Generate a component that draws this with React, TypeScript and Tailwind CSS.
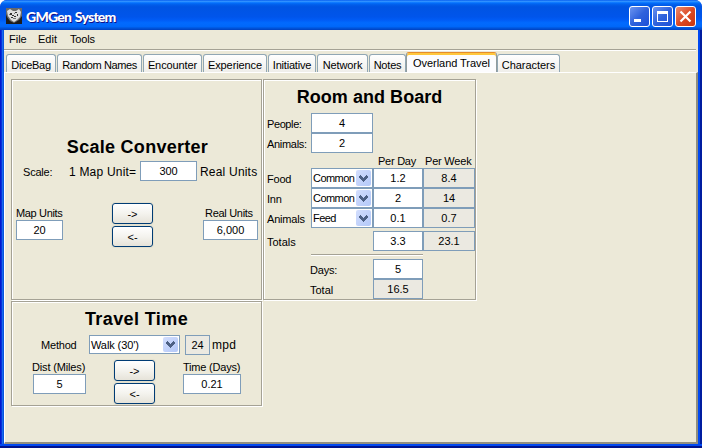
import React from "react";

type Box = { className: string; children?: React.ReactNode };

const Field = ({ className, children }: Box) => (
  <div className={`h-5 shrink-0 border border-[#7f9db9] bg-white text-center leading-[18px] ${className}`}>{children}</div>
);

const ReadOnly = ({ className, children }: Box) => (
  <div className={`h-5 shrink-0 border border-[#7f9db9] bg-[#ebe9e1] text-center leading-[18px] ${className}`}>{children}</div>
);

const Label = ({ className, children }: Box) => (
  <div className={`shrink-0 whitespace-nowrap ${className}`}>{children}</div>
);

const Select = ({ className, children }: Box) => (
  <div className={`flex shrink-0 justify-between border border-[#7f9db9] bg-white pl-px ${className}`}>
    <span className="w-0 whitespace-nowrap leading-[18px]">{children}</span>
    <span className="m-px flex w-[15px] shrink-0 items-center justify-center rounded-[2px] bg-linear-to-br from-[#d3defd] to-[#b3c8f8]">
      <svg width="9" height="7" viewBox="0 0 9 7" shapeRendering="crispEdges">
        <path d="M0 1h1V0h1v1h1v1h1v1h1V2h1V1h1V0h1v1h1v2H8v1H7v1H6v1H5v1H4V6H3V5H2V4H1V3H0z" fill="#4d6185" />
      </svg>
    </span>
  </div>
);

const Arrow = ({ children }: { children: string }) => (
  <div className="h-[21px] w-[41px] rounded-[3px] border border-[#003c74] bg-linear-to-b from-white via-[#f4f3ee] to-[#e6e3d9] text-center text-[11px] leading-[21px] shadow-[0_0_0_1px_#e3e0cf]">
    {children}
  </div>
);

const Arrows = () => (
  <div className="flex shrink-0 flex-col gap-0.5">
    <Arrow>{"->"}</Arrow>
    <Arrow>{"<-"}</Arrow>
  </div>
);

const etched = "border border-[#a5a295] shadow-[1px_1px_0_white,inset_1px_1px_0_white]";

const tabs = [
  { name: "DiceBag", cls: "w-[50px] mr-px tracking-[-0.3px]" },
  { name: "Random Names", cls: "w-[85px] mr-px tracking-[-0.4px]" },
  { name: "Encounter", cls: "w-[59px] mr-px tracking-[-0.1px]" },
  { name: "Experience", cls: "w-[64px] mr-px tracking-[-0.1px]" },
  { name: "Initiative", cls: "w-[48px] mr-px tracking-[-0.2px]" },
  { name: "Network", cls: "w-[51px] mr-px tracking-[-0.1px]" },
  { name: "Notes", cls: "w-[37px] tracking-[-0.2px]" },
  { name: "Overland Travel", cls: "w-[91px] tracking-[-0.05px]", active: true },
  { name: "Characters", cls: "w-[63px] tracking-[-0.05px]" },
];

const TitleButton = ({ className, children }: Box) => (
  <div className={`h-[21px] w-[21px] rounded-[3px] border border-white ${className}`}>
    <svg width="19" height="19" viewBox="0 0 19 19">{children}</svg>
  </div>
);

const AppIcon = () => (
  <svg width="16" height="16" viewBox="0 0 16 16" className="mt-2 ml-1.5">
    <rect width="16" height="16" fill="#1c1c1c" />
    <path d="M0 0h16v8l-3 4-5 3-4-2-3-4-1-3z" fill="#6a6a6a" />
    <path d="M1 3l3-2 3 2h3l3-2 2 3-1 5-3 3-3 2-3-2-3-4z" fill="#dedede" />
    <path d="M4 5h2v2H4zM9 4h2v1H9zM6 7h2v1H6zM11 6h1v2h-1zM5 9h2v1H5zM8 8h2v1H8z" fill="#333" />
    <path d="M7 10h3v1H7zM3 6h1v1H3zM8 5h1v1H8z" fill="#777" />
  </svg>
);

const costs = [
  { label: "Food", kind: "Common", day: "1.2", week: "8.4" },
  { label: "Inn", kind: "Common", day: "2", week: "14" },
  { label: "Animals", kind: "Feed", day: "0.1", week: "0.7" },
];

export default function App() {
  return (
    <div className="flex h-[448px] w-[702px] flex-col overflow-hidden rounded-t-[7px] bg-[#0831d9] font-['Liberation_Sans',Arial,sans-serif] text-[11px] text-black">
      <div className="flex h-[30px] shrink-0 bg-[linear-gradient(to_bottom,#0058ee_0%,#3593ff_4%,#288eff_6%,#127dff_8%,#036ffc_10%,#0262ee_14%,#0057e5_20%,#0054e3_24%,#0055eb_56%,#005bf5_66%,#026afe_76%,#0068fa_88%,#0058e0_93%,#0040c0_100%)]">
        <AppIcon />
        <div className="ml-1 flex-1 font-['Lato','Open_Sans',sans-serif] text-[14px] leading-[34px] font-black tracking-[-0.75px] [word-spacing:1px] text-white [text-shadow:1px_1px_0_#0f1089]">
          GMGen System
        </div>
        <div className="mt-1.5 mr-1.5 flex gap-0.5">
          <TitleButton className="bg-linear-to-br from-[#6b93f0] via-[#2f62dc] to-[#1d50d8]">
            <rect x="4" y="12" width="7" height="3" fill="white" />
          </TitleButton>
          <TitleButton className="bg-linear-to-br from-[#6b93f0] via-[#2f62dc] to-[#1d50d8]">
            <path d="M4 4h11v11H4z M5 7v7h9V7z" fill="white" fillRule="evenodd" />
          </TitleButton>
          <TitleButton className="bg-linear-to-br from-[#ec8a6c] via-[#dc4a24] to-[#c8360f]">
            <path d="M4.5 4.5l10 10M14.5 4.5l-10 10" stroke="white" strokeWidth="2.2" />
          </TitleButton>
        </div>
      </div>

      <div className="flex min-h-0 flex-1">
        <div className="w-1 bg-[linear-gradient(to_right,#0019cf_0_25%,#0831d9_25%_50%,#166aee_50%_75%,#0855dd_75%)]" />
        <div className="flex flex-1 flex-col bg-[#ece9d8]">
          <div className="flex h-[19px] shrink-0 leading-[18px]">
            <span className="ml-[5px] w-[29px]">File</span>
            <span className="w-8">Edit</span>
            <span className="tracking-[-0.2px]">Tools</span>
          </div>
          <div className="mr-0.5 h-0.5 shrink-0 border-t border-[#a5a295] bg-white" />
          <div className="flex h-[21px] shrink-0 items-end pl-0.5">
            {tabs.map((t) =>
              t.active ? (
                <div key={t.name} className={`h-5 shrink-0 rounded-t-[3px] border-x border-t border-x-[#919b9c] border-t-[#e68b2c] bg-[#fcfcfe] text-center leading-[21px] whitespace-nowrap shadow-[inset_0_2px_0_#ffc73c] ${t.cls}`}>{t.name}</div>
              ) : (
                <div key={t.name} className={`h-[18px] shrink-0 rounded-t-[3px] border border-b-0 border-[#91a7b4] bg-linear-to-b from-white to-[#efeeea] text-center leading-[20px] whitespace-nowrap ${t.cls}`}>{t.name}</div>
              ),
            )}
          </div>

          <div className="flex flex-1 items-start gap-px border-t border-l border-r-2 border-b-2 border-t-white border-l-white border-r-[#908e80] border-b-[#908e80] pt-1.5 pl-1.5">
            <div className="flex w-[251px] shrink-0 flex-col gap-px">
              <section className={`h-[221px] ${etched}`}>
                <h2 className="mt-[57px] pl-0.5 text-center text-[18px] leading-5 font-bold tracking-[0.28px]">Scale Converter</h2>
                <div className="mt-1 flex leading-[22px]">
                  <Label className="ml-[11px] w-[46px] tracking-[-0.2px]">Scale:</Label>
                  <Label className="w-[71px] text-[12px] tracking-[0.2px]">1 Map Unit=</Label>
                  <Field className="w-[57px] tracking-[-0.2px]">300</Field>
                  <Label className="ml-[3px] text-[12px] tracking-[0.2px]">Real Units</Label>
                </div>
                <div className="mt-5 flex items-start">
                  <div className="mt-1 ml-1 w-[96px]">
                    <Label className="h-[15px] leading-[12px] tracking-[-0.35px]">Map Units</Label>
                    <Field className="-mt-0.5 w-[47px]">20</Field>
                  </div>
                  <Arrows />
                  <div className="mt-1 ml-[50px] w-[55px]">
                    <Label className="h-[15px] pl-0.5 leading-[12px] tracking-[-0.3px]">Real Units</Label>
                    <Field className="-mt-0.5 w-[55px]">6,000</Field>
                  </div>
                </div>
              </section>

              <section className={`h-[105px] ${etched}`}>
                <h2 className="mt-[7px] text-center text-[18px] leading-5 font-bold tracking-[0.4px]">Travel Time</h2>
                <div className="mt-1.5 flex h-5 leading-5">
                  <Label className="ml-[29px] w-12 tracking-[-0.2px]">Method</Label>
                  <Select className="h-[19px] w-[91px] tracking-[-0.1px]">Walk (30&apos;)</Select>
                  <ReadOnly className="ml-[5px] w-[25px]">24</ReadOnly>
                  <Label className="ml-0.5 text-[12px] leading-[21px] tracking-[0.3px]">mpd</Label>
                </div>
                <div className="mt-[5px] flex items-start">
                  <div className="ml-5 w-[82px]">
                    <Label className="h-[14px] leading-[14px] tracking-[-0.15px]">Dist (Miles)</Label>
                    <Field className="ml-px w-[53px]">5</Field>
                  </div>
                  <Arrows />
                  <div className="ml-7">
                    <Label className="h-[14px] leading-[14px] tracking-[-0.2px]">Time (Days)</Label>
                    <Field className="w-[58px]">0.21</Field>
                  </div>
                </div>
              </section>
            </div>

            <section className={`h-[221px] w-[213px] shrink-0 pl-[3px] ${etched}`}>
              <h2 className="mt-[7px] pr-[3px] text-center text-[18px] leading-5 font-bold tracking-[0.05px]">Room and Board</h2>
              <div className="mt-1.5 flex h-5 leading-[22px]">
                <Label className="w-11 tracking-[-0.4px]">People:</Label>
                <Field className="w-[62px]">4</Field>
              </div>
              <div className="flex h-5 leading-[22px]">
                <Label className="w-11 tracking-[-0.3px]">Animals:</Label>
                <Field className="w-[62px]">2</Field>
              </div>
              <div className="flex h-[15px] pl-[111px] leading-[16px]">
                <Label className="w-[47px] tracking-[-0.25px]">Per Day</Label>
                <Label className="tracking-[-0.2px]">Per Week</Label>
              </div>
              {costs.map((c) => (
                <div key={c.label} className="flex h-5 leading-[22px]">
                  <Label className="w-11 tracking-[-0.2px]">{c.label}</Label>
                  <Select className="h-5 w-[62px] tracking-[-0.55px]">{c.kind}</Select>
                  <Field className="w-[50px]">{c.day}</Field>
                  <ReadOnly className="w-[52px]">{c.week}</ReadOnly>
                </div>
              ))}
              <div className="mt-[3px] flex h-5 leading-[22px]">
                <Label className="w-[106px]">Totals</Label>
                <Field className="w-[50px]">3.3</Field>
                <ReadOnly className="w-[52px]">23.1</ReadOnly>
              </div>
              <div className="mt-[3px] ml-11 h-0.5 w-[112px] border-t border-[#a5a295] bg-white" />
              <div className="mt-[3px] flex h-5 pl-[43px] leading-[22px]">
                <Label className="w-[63px] tracking-[-0.2px]">Days:</Label>
                <Field className="w-[50px]">5</Field>
              </div>
              <div className="flex h-5 pl-[43px] leading-[22px]">
                <Label className="w-[63px]">Total</Label>
                <ReadOnly className="w-[50px]">16.5</ReadOnly>
              </div>
            </section>
          </div>
        </div>
        <div className="w-1 bg-[linear-gradient(to_right,#0048f1_0_50%,#001da0_50%)]" />
      </div>
      <div className="h-1 shrink-0 bg-[linear-gradient(to_bottom,#0048f1_0_50%,#00138c_50%)]" />
    </div>
  );
}
